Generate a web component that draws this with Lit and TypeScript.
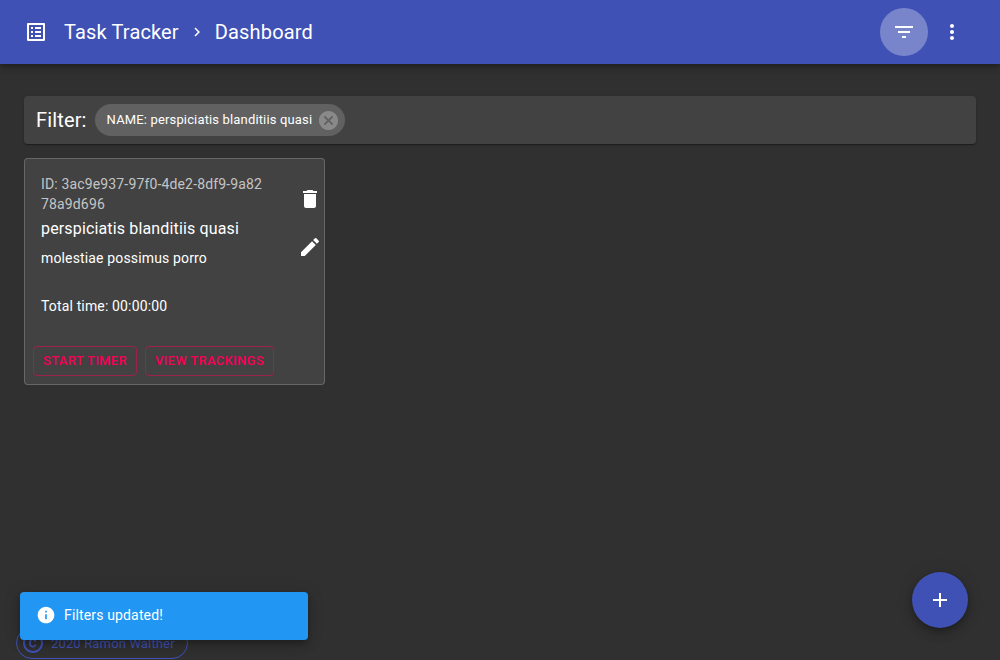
import { LitElement, html, css, svg } from 'lit';
import { customElement } from 'lit/decorators.js';

const icons = {
  list: 'M19 5v14H5V5h14m1.1-2H3.9c-.5 0-.9.4-.9.9v16.2c0 .4.4.9.9.9h16.2c.4 0 .9-.5.9-.9V3.9c0-.5-.5-.9-.9-.9zM11 7h6v2h-6V7zm0 4h6v2h-6v-2zm0 4h6v2h-6zM7 7h2v2H7zm0 4h2v2H7zm0 4h2v2H7z',
  next: 'M10 6L8.59 7.41 13.17 12l-4.58 4.59L10 18l6-6z',
  filter: 'M10 18h4v-2h-4v2zM3 6v2h18V6H3zm3 7h12v-2H6v2z',
  more: 'M12 8c1.1 0 2-.9 2-2s-.9-2-2-2-2 .9-2 2 .9 2 2 2zm0 2c-1.1 0-2 .9-2 2s.9 2 2 2 2-.9 2-2-.9-2-2-2zm0 6c-1.1 0-2 .9-2 2s.9 2 2 2 2-.9 2-2-.9-2-2-2z',
  cancel: 'M12 2C6.47 2 2 6.47 2 12s4.47 10 10 10 10-4.47 10-10S17.53 2 12 2zm5 13.59L15.59 17 12 13.41 8.41 17 7 15.59 10.59 12 7 8.41 8.41 7 12 10.59 15.59 7 17 8.41 13.41 12 17 15.59z',
  trash: 'M6 19c0 1.1.9 2 2 2h8c1.1 0 2-.9 2-2V7H6v12zM19 4h-3.5l-1-1h-5l-1 1H5v2h14V4z',
  edit: 'M3 17.25V21h3.75L17.81 9.94l-3.75-3.75L3 17.25zM20.71 7.04c.39-.39.39-1.02 0-1.41l-2.34-2.34a.9959.9959 0 0 0-1.41 0l-1.83 1.83 3.75 3.75 1.83-1.83z',
  add: 'M19 13h-6v6h-2v-6H5v-2h6V5h2v6h6v2z',
  info: 'M12 2C6.48 2 2 6.48 2 12s4.48 10 10 10 10-4.48 10-10S17.52 2 12 2zm1 15h-2v-6h2v6zm0-8h-2V7h2v2z',
  copyright: 'M10.08 10.86c.05-.33.16-.62.3-.87s.34-.46.59-.62c.24-.15.54-.22.91-.23.23.01.44.05.63.13.2.09.38.21.52.36s.25.33.34.53.13.42.14.64h1.79c-.02-.47-.11-.9-.28-1.29s-.4-.73-.7-1.01-.66-.5-1.08-.66-.88-.23-1.39-.23c-.65 0-1.22.11-1.7.34s-.88.53-1.2.92-.56.84-.71 1.36S8 11.29 8 11.87v.27c0 .58.08 1.12.23 1.64s.39.97.71 1.35.72.69 1.2.91 1.05.34 1.7.34c.47 0 .91-.08 1.32-.23s.77-.36 1.08-.63.56-.58.74-.94.29-.74.3-1.15h-1.79c-.01.21-.06.4-.15.58s-.21.33-.36.46-.32.23-.52.3c-.19.07-.39.09-.6.1-.36-.01-.66-.08-.89-.23-.25-.16-.45-.37-.59-.62s-.25-.55-.3-.88-.08-.67-.08-1v-.27c0-.35.03-.68.08-1.01zM12 2C6.48 2 2 6.48 2 12s4.48 10 10 10 10-4.48 10-10S17.52 2 12 2zm0 18c-4.41 0-8-3.59-8-8s3.59-8 8-8 8 3.59 8 8-3.59 8-8 8z',
};

const icon = (d: string, size = 24) => html`<svg
  width=${size}
  height=${size}
  viewBox="0 0 24 24"
  fill="currentColor"
>
  ${svg`<path d=${d}></path>`}
</svg>`;

@customElement('app-root')
export class AppRoot extends LitElement {
  static styles = css`
    :host {
      display: flex;
      flex-direction: column;
      height: 660px;
      overflow: hidden;
      position: relative;
      background: #303030;
      color: #fff;
      font-family: Roboto, sans-serif;
      font-size: 14px;
      letter-spacing: 0.15px;
    }
    svg {
      display: block;
      flex: none;
    }
    .bar {
      display: flex;
      align-items: center;
      flex: none;
      height: 64px;
      padding: 0 24px;
      box-sizing: border-box;
      background: #3f51b5;
      font-size: 20px;
      box-shadow: 0 2px 4px -1px rgba(0, 0, 0, 0.2), 0 4px 5px 0 rgba(0, 0, 0, 0.14),
        0 1px 10px 0 rgba(0, 0, 0, 0.12);
      z-index: 1;
    }
    .crumbs {
      display: flex;
      align-items: center;
      gap: 9px;
      margin-left: 16px;
      flex: 1;
    }
    .round {
      display: flex;
      align-items: center;
      justify-content: center;
      width: 48px;
      height: 48px;
      border-radius: 50%;
    }
    .round.active {
      background: rgba(255, 255, 255, 0.3);
    }
    main {
      flex: 1;
      padding: 32px 24px 0;
    }
    .filters {
      display: flex;
      align-items: center;
      height: 48px;
      padding-left: 12px;
      border-radius: 4px;
      background: #424242;
      box-shadow: 0 2px 1px -1px rgba(0, 0, 0, 0.2), 0 1px 1px 0 rgba(0, 0, 0, 0.14),
        0 1px 3px 0 rgba(0, 0, 0, 0.12);
    }
    .filters-label {
      font-size: 20px;
      margin-right: 8px;
    }
    .chip {
      display: flex;
      align-items: center;
      height: 32px;
      border-radius: 16px;
      background: #616161;
      font-size: 13px;
    }
    .chip-label {
      padding: 0 5px 2px 12px;
    }
    .chip-close {
      margin-right: 5px;
      color: rgba(255, 255, 255, 0.26);
    }
    .card {
      width: 301px;
      margin-top: 14px;
      box-sizing: border-box;
      border: 1px solid rgba(255, 255, 255, 0.2);
      border-radius: 4px;
      background: #424242;
    }
    .card-body {
      display: flex;
      padding: 16px 2px 22px 16px;
    }
    .info {
      width: 225px;
      margin-right: 33px;
    }
    .id {
      margin-top: -1px;
      color: rgba(255, 255, 255, 0.7);
      line-height: 20px;
      word-break: break-all;
    }
    .name {
      margin-top: 3px;
      font-size: 16px;
      line-height: 24px;
    }
    .desc {
      margin-top: 7px;
      line-height: 20px;
    }
    .total {
      margin-top: 28px;
      line-height: 20px;
    }
    .tools {
      width: 24px;
      flex: none;
    }
    .tool {
      display: flex;
      align-items: center;
      height: 48px;
    }
    .actions {
      display: flex;
      gap: 8px;
      padding: 8px;
    }
    .btn {
      height: 30px;
      padding: 0 9px;
      box-sizing: border-box;
      border: 1px solid rgba(245, 0, 87, 0.5);
      border-radius: 4px;
      color: #f50057;
      font-size: 13px;
      font-weight: 500;
      line-height: 28px;
      letter-spacing: 0.3px;
    }
    footer {
      display: flex;
      flex: none;
      margin: 0 0 1px 16px;
    }
    .credit {
      display: flex;
      align-items: center;
      height: 32px;
      box-sizing: border-box;
      padding: 0 12px 0 4px;
      border: 1px solid #3f51b5;
      border-radius: 16px;
      color: #3f51b5;
      font-size: 13px;
      gap: 6px;
    }
    .fab {
      position: absolute;
      right: 32px;
      bottom: 32px;
      display: flex;
      align-items: center;
      justify-content: center;
      width: 56px;
      height: 56px;
      border-radius: 50%;
      background: #3f51b5;
      box-shadow: 0 3px 5px -1px rgba(0, 0, 0, 0.2), 0 6px 10px 0 rgba(0, 0, 0, 0.14),
        0 1px 18px 0 rgba(0, 0, 0, 0.12);
    }
    .toast {
      position: absolute;
      left: 20px;
      bottom: 20px;
      display: flex;
      align-items: center;
      gap: 8px;
      width: 288px;
      height: 48px;
      padding: 0 16px 2px;
      box-sizing: border-box;
      border-radius: 4px;
      background: #2196f3;
      box-shadow: 0 3px 5px -1px rgba(0, 0, 0, 0.2), 0 6px 10px 0 rgba(0, 0, 0, 0.14),
        0 1px 18px 0 rgba(0, 0, 0, 0.12);
    }
  `;

  render() {
    return html`
      <header class="bar">
        ${icon(icons.list)}
        <div class="crumbs">
          <span>Task Tracker</span>
          ${icon(icons.next, 18)}
          <span>Dashboard</span>
        </div>
        <div class="round active">${icon(icons.filter)}</div>
        <div class="round">${icon(icons.more)}</div>
      </header>
      <main>
        <div class="filters">
          <span class="filters-label">Filter:</span>
          <div class="chip">
            <span class="chip-label">NAME: perspiciatis blanditiis quasi</span>
            <span class="chip-close">${icon(icons.cancel, 23)}</span>
          </div>
        </div>
        <div class="card">
          <div class="card-body">
            <div class="info">
              <div class="id">ID: 3ac9e937-97f0-4de2-8df9-9a8278a9d696</div>
              <div class="name">perspiciatis blanditiis quasi</div>
              <div class="desc">molestiae possimus porro</div>
              <div class="total">Total time: 00:00:00</div>
            </div>
            <div class="tools">
              <div class="tool">${icon(icons.trash)}</div>
              <div class="tool">${icon(icons.edit)}</div>
            </div>
          </div>
          <div class="actions">
            <div class="btn">START TIMER</div>
            <div class="btn">VIEW TRACKINGS</div>
          </div>
        </div>
      </main>
      <footer>
        <div class="credit">${icon(icons.copyright)}<span>2020 Ramon Walther</span></div>
      </footer>
      <div class="fab">${icon(icons.add)}</div>
      <div class="toast">${icon(icons.info, 20)}<span>Filters updated!</span></div>
    `;
  }
}
